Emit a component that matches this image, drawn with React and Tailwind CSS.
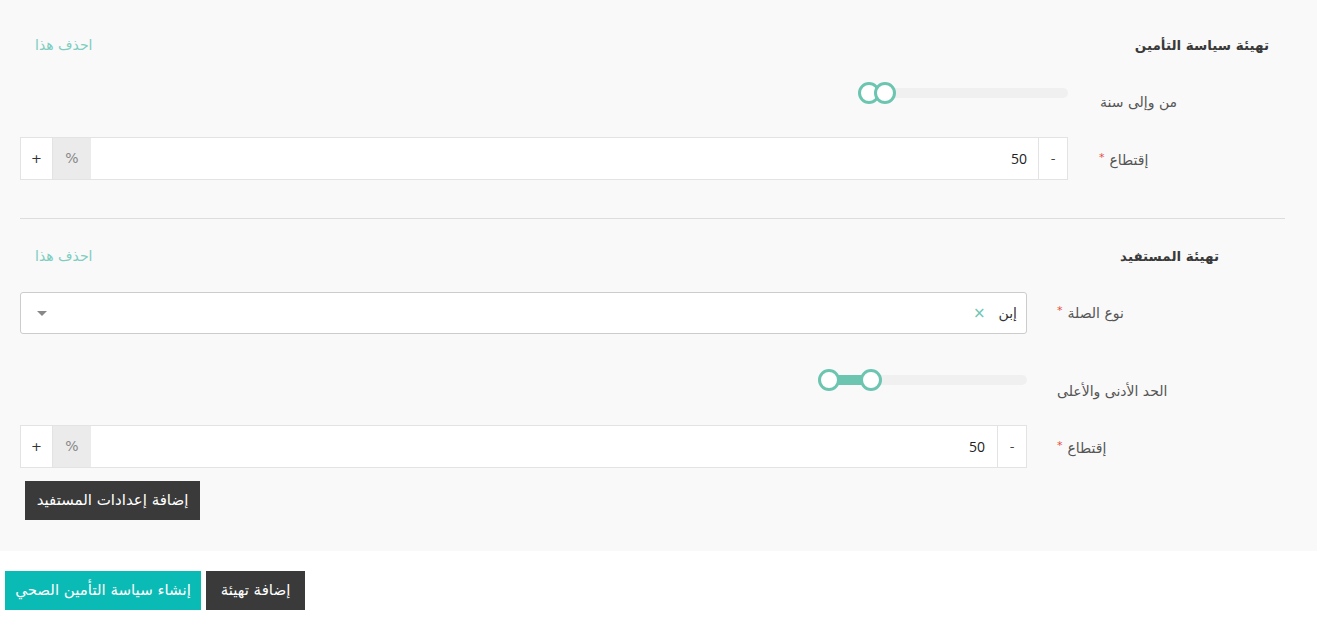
import React from "react"

const font = { fontFamily: '"DejaVu Sans", "Noto Sans", sans-serif' }

function Label({ text, required, pl }) {
  return (
    <div className={`shrink-0 text-left ${pl}`} dir="ltr">
      <span dir="rtl" className="text-[14px] text-[#555] leading-[20px]">
        {text}
        {required && <span className="text-[#e74c3c] text-[11px] align-top mr-[5px]">*</span>}
      </span>
    </div>
  )
}

function NumberGroup({ value, valuePad }) {
  return (
    <div className="flex-1 flex h-[43px] text-[13px] text-[#333]">
      <button className="w-[33px] bg-white border border-[#e3e3e3] flex items-center justify-center text-[#333]">+</button>
      <div className="w-[38px] bg-[#ebebeb] border-y border-[#e3e3e3] flex items-center justify-center text-[#888] text-[14px]">%</div>
      <div
        className={`flex-1 bg-white border-y border-[#e3e3e3] flex items-center justify-end ${valuePad} text-[14px] text-[#222]`}
        style={{ fontFamily: '"Open Sans", sans-serif' }}
      >
        {value}
      </div>
      <button className="w-[30px] bg-white border border-[#e3e3e3] flex items-center justify-center text-[#444]">-</button>
    </div>
  )
}

function Handle() {
  return <div className="w-[22px] h-[22px] rounded-full bg-white border-[3px] border-[#6cc5b0] shrink-0" />
}

export default function App() {
  return (
    <div className="min-h-[630px] bg-white" style={font}>
      <div className="bg-[#f9f9f9] pt-[30px] pl-[20px] pr-[32px] pb-[31px]">
        {/* Section 1 */}
        <div className="flex items-center justify-between h-[30px]">
          <a className="pl-[15px] text-[14px] text-[#7dcdc0] cursor-pointer">احذف هذا</a>
          <h3 dir="rtl" className="pr-[16px] text-[13.5px] font-bold text-[#3a3a3a]">تهيئة سياسة التأمين</h3>
        </div>

        <div className="flex mt-[13px] h-[40px]">
          <div className="flex-1 flex justify-end items-center">
            <div className="relative w-[209px] h-[10px] rounded-full bg-[#f0f0f0]">
              <div className="absolute left-[-1px] top-[-6px] flex">
                <Handle />
                <div className="ml-[-6px]">
                  <Handle />
                </div>
              </div>
            </div>
          </div>
          <div className="w-[217px] pt-[17px]">
            <Label text="من وإلى سنة" pl="pl-[32px]" />
          </div>
        </div>

        <div className="flex mt-[24px] items-center">
          <NumberGroup value="50" valuePad="pr-[11px]" />
          <div className="w-[217px] pt-[3px]">
            <Label text="إقتطاع" required pl="pl-[31px]" />
          </div>
        </div>

        <div className="mt-[38px] border-t border-[#dddddd]" />

        {/* Section 2 */}
        <div className="mr-[50px]">
          <div className="flex items-center justify-between h-[30px] mt-[22px]">
            <a className="pl-[15px] text-[14px] text-[#7dcdc0] cursor-pointer">احذف هذا</a>
            <h3 dir="rtl" className="pr-[16px] text-[13.5px] font-bold text-[#3a3a3a]">تهيئة المستفيد</h3>
          </div>

          <div className="flex mt-[21px] items-center">
            <div className="flex-1 h-[42px] bg-white border border-[#cccccc] rounded-[3px] flex items-center justify-between pl-[16px] pr-[9px]">
              <span className="w-0 h-0 border-x-[5px] border-x-transparent border-t-[5px] border-t-[#888]" />
              <div className="flex items-center gap-[13px]">
                <span className="text-[#6cc5b0] text-[15px] leading-none">×</span>
                <span dir="rtl" className="text-[14px] text-[#333]">إبن</span>
              </div>
            </div>
            <div className="w-[208px]">
              <Label text="نوع الصلة" required pl="pl-[30px]" />
            </div>
          </div>

          <div className="flex mt-[26px] h-[40px]">
            <div className="flex-1 flex justify-end items-center">
              <div className="relative w-[209px] h-[10px] rounded-full bg-[#f0f0f0]">
                <div className="absolute left-[10px] w-[45px] top-0 h-[10px] bg-[#6cc5b0]" />
                <div className="absolute left-0 top-[-6px] flex">
                  <Handle />
                  <div className="ml-[20px]">
                    <Handle />
                  </div>
                </div>
              </div>
            </div>
            <div className="w-[208px] pt-[19px]">
              <Label text="الحد الأدنى والأعلى" pl="pl-[30px]" />
            </div>
          </div>

          <div className="flex mt-[25px] items-center">
            <NumberGroup value="50" valuePad="pr-[12px]" />
            <div className="w-[208px] pt-[3px]">
              <Label text="إقتطاع" required pl="pl-[30px]" />
            </div>
          </div>

          <button className="mt-[13px] ml-[5px] h-[39px] w-[175px] bg-[#3a3a3a] text-white text-[15px]">
            إضافة إعدادات المستفيد
          </button>
        </div>
      </div>

      <div className="flex gap-[5px] pl-[5px] mt-[20px]">
        <button className="h-[39px] w-[196px] bg-[#0abab5] text-white text-[15px]">إنشاء سياسة التأمين الصحي</button>
        <button className="h-[39px] w-[99px] bg-[#3a3a3a] text-white text-[15px]">إضافة تهيئة</button>
      </div>
    </div>
  )
}
